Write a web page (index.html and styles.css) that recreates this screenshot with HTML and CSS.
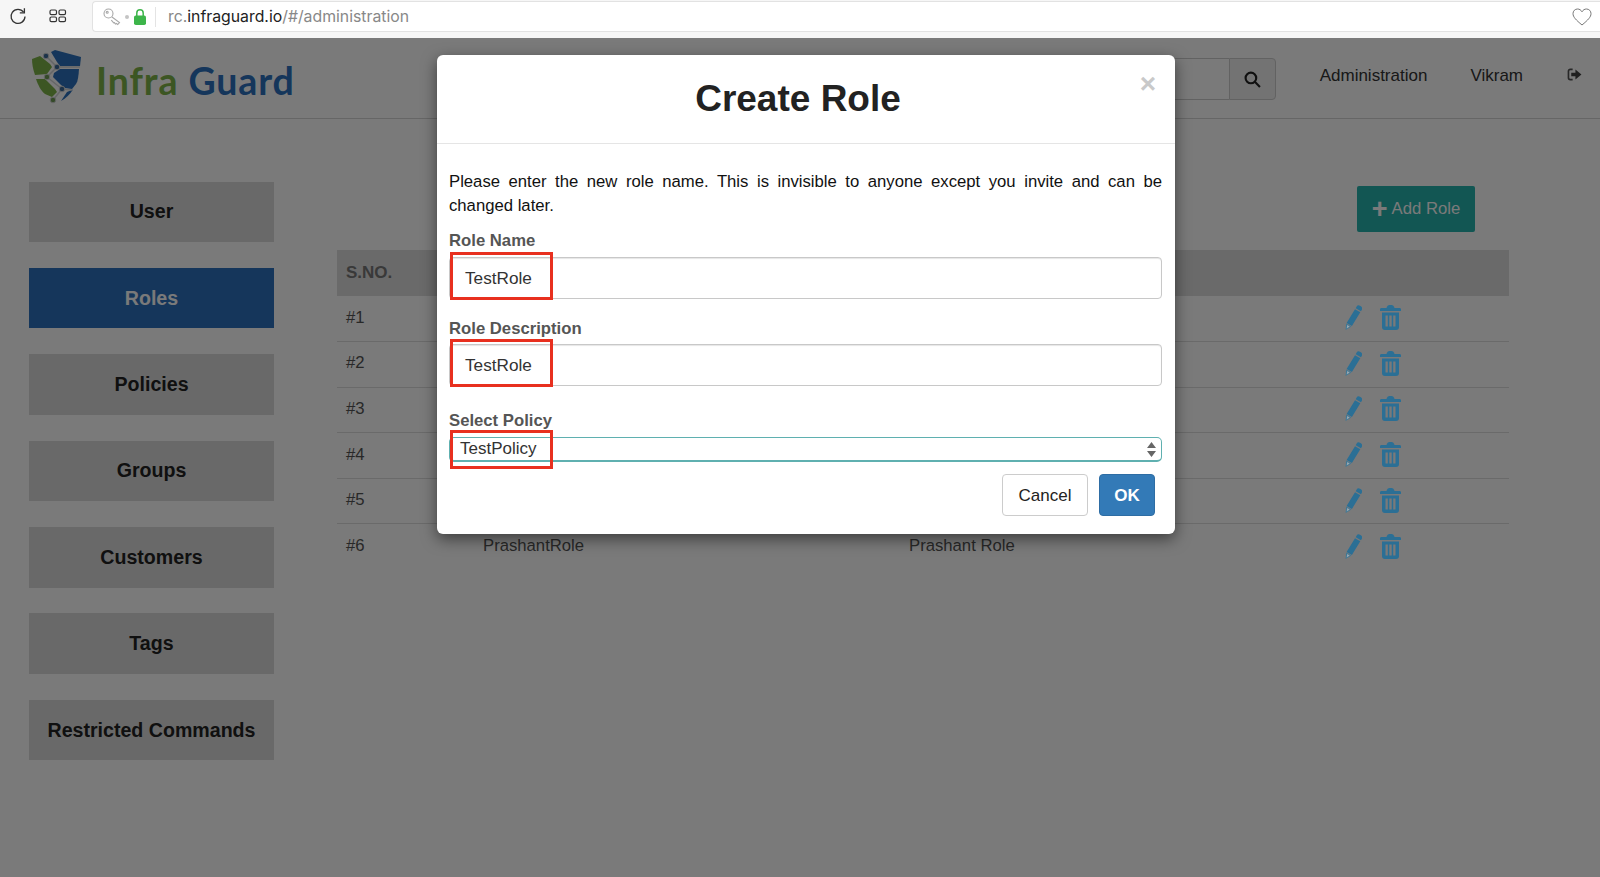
FILE: index.html
```html
<!DOCTYPE html>
<html lang="en">
<head>
    <meta charset="UTF-8">
    <title>Infra Guard | Administration</title>
    <link rel="stylesheet" href="styles.css">
</head>
<body>
    <!-- Browser toolbar -->
    <div class="browser-bar">
        <svg class="tool-icon" width="20" height="20" viewBox="0 0 20 20" fill="none" stroke="#333" stroke-width="1.3">
            <path d="M15.6 6.2A7 7 0 1 0 17 10.5"/>
            <path d="M16.4 2.2v4.6h-4.6" stroke-linejoin="miter"/>
        </svg>
        <svg class="tool-icon tabs-icon" width="18" height="14" viewBox="0 0 18 14" fill="none" stroke="#333" stroke-width="1.2">
            <rect x="1" y="1" width="6.5" height="4.6" rx="1.4"/>
            <rect x="10" y="1" width="6.5" height="4.6" rx="1.4"/>
            <rect x="1" y="8" width="6.5" height="4.6" rx="1.4"/>
            <rect x="10" y="8" width="6.5" height="4.6" rx="1.4"/>
        </svg>
        <div class="url-box">
            <svg width="18" height="18" viewBox="0 0 18 18" fill="none" stroke="#a8a8a8" stroke-width="1.1">
                <circle cx="5.500" cy="5.500" r="4.500"/>
                <circle cx="4.200" cy="4.200" r="1"/>
                <path d="M9 9l7.500 5.500-1.800 2-1.200-1-1 .6-1-1.400-.8.200-2.400-2.700"/>
            </svg>
            <span class="url-dot"></span>
            <svg class="url-lock" width="12" height="16" viewBox="0 0 12 16">
                <path d="M2.800 7V4a3.200 3.200 0 0 1 6.400 0v3" fill="none" stroke="#3db54a" stroke-width="1.500"/>
                <rect x="0" y="6.500" width="12" height="9.500" rx="1.800" fill="#3db54a"/>
            </svg>
            <span class="url-sep"></span>
            <span class="url-text">rc.<b>infraguard.io</b>/#/administration</span>
            <svg class="url-heart" width="20" height="18" viewBox="0 0 20 18" fill="none" stroke="#777" stroke-width="1">
                <path d="M10 17C4 12 1 9 1 5.600 1 3 3 1 5.500 1 7.400 1 9 2 10 3.800 11 2 12.600 1 14.500 1 17 1 19 3 19 5.600 19 9 16 12 10 17z"/>
            </svg>
        </div>
    </div>

    <div class="page">
        <header class="site-header">
            <div class="logo">
                <svg width="50" height="54" viewBox="7 8 50 54">
                    <!-- shield parts -->
                    <path d="M26 10l4-2 26 7-1 9H35l-3-4z" fill="#2c72be"/>
                    <path d="M35 27h19c-.500 7-1 12-3 15l-4 5-7-1-4-3-8-8 1-4z" fill="#2c72be"/>
                    <path d="M42 50l6-2.500c-3 5-7 8.500-12 11.500z" fill="#2c72be"/>
                    <path d="M7 17l8-3 10 8 2 3-5 7-12 1C8 27 7 22 7 17z" fill="#7eb44a"/>
                    <path d="M11 37h9l10 10 2 3-5 5-7-3c-4-3-7-9-9-15z" fill="#7eb44a"/>
                    <!-- circuit lines and nodes -->
                    <path d="M21 14l11 11M32 25H55M32 25L22 35M22 35L37 47M37 47L28 58M37 47l10 1" stroke="#d4d6d8" stroke-width="1.500" fill="none"/>
                    <circle cx="21" cy="14" r="2.800" fill="#3e6c9c" stroke="#d4d6d8"/>
                    <circle cx="32" cy="25" r="2.800" fill="#3e6c9c" stroke="#d4d6d8"/>
                    <circle cx="22" cy="35" r="2.800" fill="#6f9c56" stroke="#d4d6d8"/>
                    <circle cx="37" cy="47" r="2.800" fill="#3e6c9c" stroke="#d4d6d8"/>
                    <circle cx="28" cy="58" r="2.800" fill="#6f9c56" stroke="#d4d6d8"/>
                </svg>
                <span class="logo-text"><span class="logo-green">Infra</span> <span class="logo-blue">Guard</span></span>
            </div>
            <div class="header-right">
                <div class="search-box">
                    <div class="search-input"></div>
                    <div class="search-btn">
                        <svg width="17" height="17" viewBox="0 0 16 16" fill="none" stroke="#222" stroke-width="2">
                            <circle cx="6.500" cy="6.500" r="5"/>
                            <path d="M10.200 10.200l4.800 4.800"/>
                        </svg>
                    </div>
                </div>
                <a class="nav-link nav-admin">Administration</a>
                <a class="nav-link nav-user">Vikram</a>
                <svg class="nav-logout" width="15" height="13" viewBox="0 0 16 14">
                    <path d="M6 1.500H3.500a2 2 0 0 0-2 2v7a2 2 0 0 0 2 2H6" fill="none" stroke="#555" stroke-width="1.800"/>
                    <path d="M4.500 5H9V1.500L15.500 7 9 12.500V9H4.500z" fill="#444"/>
                </svg>
            </div>
        </header>

        <div class="main">
            <nav class="sidebar">
                <a class="side-btn">User</a>
                <a class="side-btn active">Roles</a>
                <a class="side-btn">Policies</a>
                <a class="side-btn">Groups</a>
                <a class="side-btn">Customers</a>
                <a class="side-btn">Tags</a>
                <a class="side-btn">Restricted Commands</a>
            </nav>

            <section class="content">
                <div class="content-top">
                    <a class="add-btn"><span class="add-plus">+</span> Add Role</a>
                </div>
                <table class="roles-table">
                    <colgroup>
                        <col class="col-sno">
                        <col class="col-name">
                        <col class="col-desc">
                        <col>
                    </colgroup>
                    <thead>
                        <tr><th>S.NO.</th><th></th><th></th><th></th></tr>
                    </thead>
                    <tbody id="rows"></tbody>
                </table>
            </section>
        </div>

        <div class="overlay"></div>

        <!-- Create Role Modal -->
        <div class="modal">
            <div class="modal-header">
                <h2>Create Role</h2>
                <span class="modal-close">×</span>
            </div>
            <div class="modal-body">
                <p class="modal-intro">Please enter the new role name. This is invisible to anyone except you invite and can be changed later.</p>

                <div class="field field-name">
                    <label>Role Name</label>
                    <div class="text-input">TestRole</div>
                    <span class="mark"></span>
                </div>
                <div class="field field-desc">
                    <label>Role Description</label>
                    <div class="text-input">TestRole</div>
                    <span class="mark"></span>
                </div>
                <div class="field field-policy">
                    <label>Select Policy</label>
                    <div class="select-input">
                        TestPolicy
                        <svg width="9" height="15" viewBox="0 0 9 15" fill="#666">
                            <path d="M4.500 0L9 6H0zM4.500 15L0 9h9z"/>
                        </svg>
                    </div>
                    <span class="mark"></span>
                </div>

                <div class="modal-actions">
                    <button class="btn btn-cancel">Cancel</button>
                    <button class="btn btn-ok">OK</button>
                </div>
            </div>
        </div>
    </div>

    <script>
        // Table rows, only the last one shows from under the modal
        const roles = [
            ["#1", "", ""],
            ["#2", "", ""],
            ["#3", "", ""],
            ["#4", "", ""],
            ["#5", "", ""],
            ["#6", "PrashantRole", "Prashant Role"]
        ];

        const pencil = `<svg width="17" height="25" viewBox="0 0 17 25"><path d="M11.500 1.800a2.600 2.600 0 0 1 3.500-1l.8.500a2.600 2.600 0 0 1 1 3.500l-.8 1.400-5.300-3zM10 4.200l5.300 3L6.900 21 1.600 18z" fill="#2b6f95"/><path d="M1.200 18.600l5.200 3L.6 25z" fill="#3f7896"/><path d="M2.200 20l2.500 1.500-3 2.100z" fill="#9aa8b0"/></svg>`;
        const trash = `<svg width="21" height="25" viewBox="0 0 21 25"><path d="M6.500 3C7 1 8 0 9.500 0h2c1.500 0 2.500 1 3 3h5c1 0 1.500.6 1.500 1.500V6H0V4.500C0 3.600.5 3 1.500 3zM2 7.500h17v14.500c0 2-1 3-3 3H5c-2 0-3-1-3-3zM5.500 10.500v11h2.300v-11zm3.800 0v11h2.400v-11zm3.900 0v11h2.300v-11z" fill="#2b6f95" fill-rule="evenodd"/></svg>`;

        document.getElementById("rows").innerHTML = roles.map((r) => `
            <tr>
                <td>${r[0]}</td>
                <td>${r[1]}</td>
                <td>${r[2]}</td>
                <td><span class="row-actions">${pencil}${trash}</span></td>
            </tr>
        `).join("");
    </script>
</body>
</html>
```

FILE: styles.css
```css
* {
    box-sizing: border-box;
}

html, body {
    height: 100%;
}

body {
    margin: 0;
    font-family: "Liberation Sans", Arial, sans-serif;
    font-size: 16.7px;
    color: #333;
    background: #fff;
    overflow: hidden;
}

/* Browser toolbar */
.browser-bar {
    height: 38px;
    background: #f6f6f6;
    display: flex;
    align-items: flex-start;
    padding: 1px 0 0 8px;
}

.tool-icon {
    margin-top: 5px;
    flex-shrink: 0;
}

.tabs-icon {
    margin: 8px 0 0 21px;
}

.url-box {
    flex: 1;
    height: 31px;
    margin-left: 25px;
    background: #fff;
    border: 1px solid #e2e2e2;
    border-right: none;
    border-top-left-radius: 4px;
    border-bottom-left-radius: 4px;
    display: flex;
    align-items: center;
    padding-left: 10px;
}

.url-dot {
    width: 4px;
    height: 4px;
    margin-left: 4px;
    border-radius: 50%;
    background: #c4c4c4;
}

.url-lock {
    margin-left: 5px;
}

.url-sep {
    width: 1px;
    height: 20px;
    margin-left: 9px;
    background: #e4e4e4;
}

.url-text {
    margin-left: 12px;
    font-family: "Inter", "Liberation Sans", sans-serif;
    font-size: 15.8px;
    color: #888;
}

.url-text b {
    font-weight: 400;
    color: #222;
}

.url-heart {
    margin-left: auto;
    margin-right: 8px;
}

/* Page under the modal */
.page {
    position: relative;
    height: calc(100% - 38px);
    overflow: hidden;
}

.overlay {
    position: absolute;
    inset: 0;
    background: rgba(0, 0, 0, 0.52);
}

.site-header {
    height: 81px;
    display: flex;
    justify-content: space-between;
    border-bottom: 1px solid #d5d5d5;
}

.logo {
    display: flex;
    align-items: flex-start;
    padding: 12px 0 0 32px;
}

.logo-text {
    margin: 8px 0 0 14px;
    font-family: "Lato", sans-serif;
    font-size: 37.5px;
    font-weight: 700;
    letter-spacing: 0.9px;
    white-space: nowrap;
}

.logo-green {
    color: #7eb44a;
}

.logo-blue {
    color: #2c72be;
}

.header-right {
    display: flex;
    align-items: flex-start;
}

.search-box {
    display: flex;
    margin-top: 20px;
    height: 42px;
}

.search-input {
    width: 80px;
    border: 1px solid #ccc;
    border-right: none;
}

.search-btn {
    width: 47px;
    display: flex;
    align-items: center;
    justify-content: center;
    background: #f0f0f0;
    border: 1px solid #ccc;
    border-radius: 0 4px 4px 0;
}

.nav-link {
    margin-top: 28px;
    color: #333;
    font-size: 17px;
}

.nav-admin {
    margin-left: 44px;
}

.nav-user {
    margin-left: 43px;
}

.nav-logout {
    margin: 30px 18px 0 44px;
}

.main {
    display: flex;
    padding: 62.5px 91px 0 29px;
}

.sidebar {
    width: 245px;
    display: flex;
    flex-direction: column;
    gap: 25.9px;
    flex-shrink: 0;
}

.side-btn {
    height: 60.5px;
    display: flex;
    align-items: center;
    justify-content: center;
    background: #dcdcdc;
    font-size: 19.6px;
    font-weight: 700;
    color: #222;
}

.side-btn.active {
    background: #2c72be;
    color: #fff;
}

.content {
    flex: 1;
    margin-left: 63px;
}

.content-top {
    display: flex;
    justify-content: flex-end;
    padding: 4.5px 34px 18px 0;
}

.add-btn {
    width: 118px;
    height: 46px;
    display: flex;
    align-items: center;
    justify-content: center;
    gap: 4px;
    background: #26b3ad;
    border-radius: 2px;
    color: #fff;
    font-size: 16.7px;
}

.add-plus {
    font-size: 27px;
    font-weight: 700;
    line-height: 1;
}

.roles-table {
    width: 100%;
    table-layout: fixed;
    border-collapse: collapse;
}

.col-sno {
    width: 137px;
}

.col-name {
    width: 426px;
}

.col-desc {
    width: 436px;
}

.roles-table th {
    height: 46px;
    padding: 0 9px;
    background: #dedede;
    text-align: left;
    font-size: 17px;
    font-weight: 700;
    color: #777;
}

.roles-table td {
    height: 45.6px;
    padding: 0 9px 2px;
    border-bottom: 1px solid #ddd;
    color: #555;
}

.roles-table tr:last-child td {
    border-bottom: none;
}

/* These sit over the dim layer, they stay brighter in the reference */
.row-actions {
    position: relative;
    z-index: 1;
    display: flex;
    align-items: center;
    gap: 18px;
}

/* Create Role Modal */
.modal {
    position: absolute;
    top: 17px;
    left: 437px;
    width: 738px;
    background: #fff;
    border-radius: 6px;
    box-shadow: 0 5px 15px rgba(0, 0, 0, 0.5);
    z-index: 2;
}

.modal-header {
    position: relative;
    height: 89px;
    display: flex;
    align-items: center;
    justify-content: center;
    padding-right: 16px;
    border-bottom: 1px solid #e5e5e5;
}

.modal-header h2 {
    margin: 0;
    font-size: 37px;
    font-weight: 700;
    color: #222;
}

.modal-close {
    position: absolute;
    top: 13px;
    right: 19px;
    font-size: 28px;
    font-weight: 700;
    color: #c9c9c9;
}

.modal-body {
    padding: 26px 13px 18px 12px;
}

.modal-intro {
    margin: 0;
    line-height: 24px;
    text-align: justify;
    color: #111;
}

.field {
    position: relative;
}

.field label {
    display: block;
    padding-top: 1px;
    font-weight: 700;
    line-height: 20px;
    color: #555;
}

.field-name {
    margin-top: 12px;
}

.field-desc {
    margin-top: 19px;
}

.field-desc .text-input {
    margin-top: 5px;
}

.field-policy {
    margin-top: 24px;
}

.text-input {
    height: 42px;
    margin-top: 6px;
    padding: 1px 15px 0;
    display: flex;
    align-items: center;
    border: 1px solid #c8c8c8;
    border-radius: 4px;
    box-shadow: inset 0 1px 1px rgba(0, 0, 0, 0.1);
    font-size: 17.2px;
    color: #333;
}

.select-input {
    height: 25px;
    margin-top: 6px;
    padding: 0 5px 0 10px;
    display: flex;
    align-items: center;
    justify-content: space-between;
    border: 1px solid #5fb0b0;
    border-bottom-width: 2px;
    border-radius: 5px;
    font-size: 17px;
    color: #333;
}

/* Red annotation boxes from the screenshot */
.mark {
    position: absolute;
    left: 1px;
    top: 22px;
    width: 103px;
    height: 48px;
    border: 3px solid #e8301f;
}

.field-desc .mark {
    top: 21px;
}

.field-policy .mark {
    top: 20px;
    height: 39px;
}

.modal-actions {
    display: flex;
    justify-content: flex-end;
    gap: 11px;
    margin-top: 12px;
    padding-right: 7px;
}

.btn {
    height: 42px;
    padding: 1px 0 0;
    border-radius: 4px;
    font-family: inherit;
    font-size: 17px;
}

.btn-cancel {
    width: 86px;
    background: #fff;
    border: 1px solid #ccc;
    color: #222;
}

.btn-ok {
    width: 56px;
    background: #337ab7;
    border: 1px solid #2e6da4;
    color: #fff;
    font-weight: 700;
}
```
